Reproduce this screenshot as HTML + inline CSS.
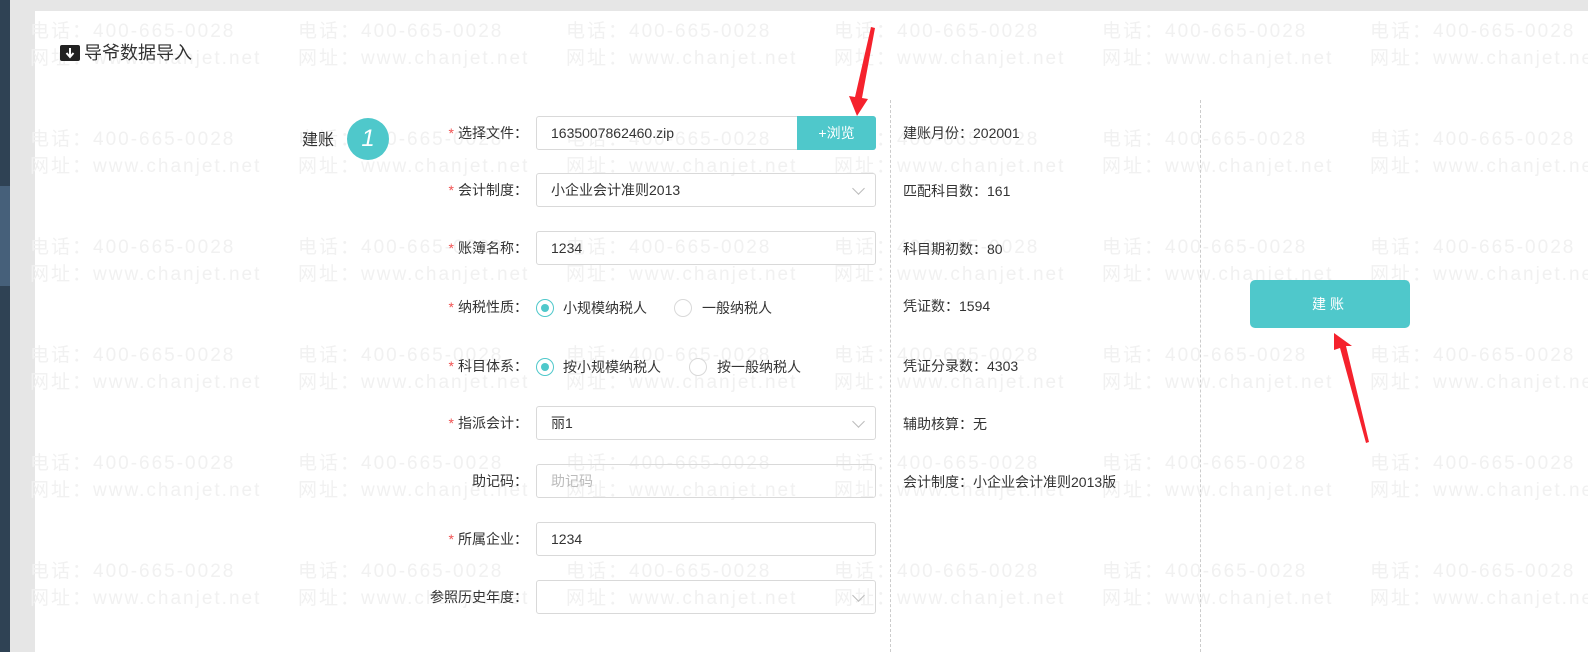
<!DOCTYPE html>
<html><head><meta charset="utf-8"><style>
*{margin:0;padding:0;box-sizing:border-box}
body{width:1588px;height:652px;overflow:hidden;position:relative;background:#e6e6e6;font-family:"Liberation Sans","Noto Sans CJK SC",sans-serif;color:#333;font-size:14px}
.side{position:absolute;left:0;top:0;width:10px;height:652px;background:#2f4254}
.side .hl{position:absolute;left:0;top:186px;width:10px;height:100px;background:#46607a}
.panel{position:absolute;left:35px;top:11px;right:0;bottom:0;background:#fff}
.wm{position:absolute;color:#f1f1f1;font-size:19px;line-height:27px;white-space:nowrap;letter-spacing:2px;font-weight:normal}
.abs{position:absolute}
.lbl{position:absolute;right:1060px;width:200px;text-align:right;font-size:14px;line-height:20px;color:#333}
.lbl b{color:#f05050;font-weight:normal;margin-right:4px}
.inp{position:absolute;left:536px;width:340px;height:34px;border:1px solid #d9d9d9;border-radius:3px;padding-left:14px;line-height:32px;font-size:14px;color:#333;background:transparent}
.chev{position:absolute;right:12px;top:10px;width:9px;height:9px;border-right:1px solid #bbb;border-bottom:1px solid #bbb;transform:rotate(45deg)}
.info{position:absolute;left:903px;font-size:14px;line-height:20px}
.radio{position:absolute;width:18px;height:18px;border-radius:50%;border:1px solid #d9d9d9;background:#fff}
.radio.on{border-color:#4fc8cb}
.radio.on:after{content:"";position:absolute;left:4px;top:4px;width:8px;height:8px;border-radius:50%;background:#4fc8cb}
.rt{position:absolute;font-size:14px;line-height:20px}
.dash{position:absolute;top:100px;bottom:0;border-left:1px dashed #ccc}
</style></head><body>
<div class="side"><div class="hl"></div></div>
<div class="panel"></div>

<div class="wm" style="left:30px;top:18px">电话：400-665-0028<br>网址：www.chanjet.net</div>
<div class="wm" style="left:298px;top:18px">电话：400-665-0028<br>网址：www.chanjet.net</div>
<div class="wm" style="left:566px;top:18px">电话：400-665-0028<br>网址：www.chanjet.net</div>
<div class="wm" style="left:834px;top:18px">电话：400-665-0028<br>网址：www.chanjet.net</div>
<div class="wm" style="left:1102px;top:18px">电话：400-665-0028<br>网址：www.chanjet.net</div>
<div class="wm" style="left:1370px;top:18px">电话：400-665-0028<br>网址：www.chanjet.net</div>
<div class="wm" style="left:30px;top:126px">电话：400-665-0028<br>网址：www.chanjet.net</div>
<div class="wm" style="left:298px;top:126px">电话：400-665-0028<br>网址：www.chanjet.net</div>
<div class="wm" style="left:566px;top:126px">电话：400-665-0028<br>网址：www.chanjet.net</div>
<div class="wm" style="left:834px;top:126px">电话：400-665-0028<br>网址：www.chanjet.net</div>
<div class="wm" style="left:1102px;top:126px">电话：400-665-0028<br>网址：www.chanjet.net</div>
<div class="wm" style="left:1370px;top:126px">电话：400-665-0028<br>网址：www.chanjet.net</div>
<div class="wm" style="left:30px;top:234px">电话：400-665-0028<br>网址：www.chanjet.net</div>
<div class="wm" style="left:298px;top:234px">电话：400-665-0028<br>网址：www.chanjet.net</div>
<div class="wm" style="left:566px;top:234px">电话：400-665-0028<br>网址：www.chanjet.net</div>
<div class="wm" style="left:834px;top:234px">电话：400-665-0028<br>网址：www.chanjet.net</div>
<div class="wm" style="left:1102px;top:234px">电话：400-665-0028<br>网址：www.chanjet.net</div>
<div class="wm" style="left:1370px;top:234px">电话：400-665-0028<br>网址：www.chanjet.net</div>
<div class="wm" style="left:30px;top:342px">电话：400-665-0028<br>网址：www.chanjet.net</div>
<div class="wm" style="left:298px;top:342px">电话：400-665-0028<br>网址：www.chanjet.net</div>
<div class="wm" style="left:566px;top:342px">电话：400-665-0028<br>网址：www.chanjet.net</div>
<div class="wm" style="left:834px;top:342px">电话：400-665-0028<br>网址：www.chanjet.net</div>
<div class="wm" style="left:1102px;top:342px">电话：400-665-0028<br>网址：www.chanjet.net</div>
<div class="wm" style="left:1370px;top:342px">电话：400-665-0028<br>网址：www.chanjet.net</div>
<div class="wm" style="left:30px;top:450px">电话：400-665-0028<br>网址：www.chanjet.net</div>
<div class="wm" style="left:298px;top:450px">电话：400-665-0028<br>网址：www.chanjet.net</div>
<div class="wm" style="left:566px;top:450px">电话：400-665-0028<br>网址：www.chanjet.net</div>
<div class="wm" style="left:834px;top:450px">电话：400-665-0028<br>网址：www.chanjet.net</div>
<div class="wm" style="left:1102px;top:450px">电话：400-665-0028<br>网址：www.chanjet.net</div>
<div class="wm" style="left:1370px;top:450px">电话：400-665-0028<br>网址：www.chanjet.net</div>
<div class="wm" style="left:30px;top:558px">电话：400-665-0028<br>网址：www.chanjet.net</div>
<div class="wm" style="left:298px;top:558px">电话：400-665-0028<br>网址：www.chanjet.net</div>
<div class="wm" style="left:566px;top:558px">电话：400-665-0028<br>网址：www.chanjet.net</div>
<div class="wm" style="left:834px;top:558px">电话：400-665-0028<br>网址：www.chanjet.net</div>
<div class="wm" style="left:1102px;top:558px">电话：400-665-0028<br>网址：www.chanjet.net</div>
<div class="wm" style="left:1370px;top:558px">电话：400-665-0028<br>网址：www.chanjet.net</div>

<div class="abs" style="left:60px;top:45px;width:20px;height:16px;background:#222;border-radius:2px"></div>
<svg class="abs" style="left:60px;top:45px" width="20" height="16"><path d="M10 3v8M6.5 8l3.5 4 3.5-4" stroke="#fff" stroke-width="2" fill="none"/></svg>
<div class="abs" style="left:84px;top:41px;font-size:18px;line-height:24px;color:#333">导爷数据导入</div>

<div class="abs" style="left:302px;top:130px;font-size:16px;line-height:22px">建账</div>
<div class="abs" style="left:347px;top:118px;width:42px;height:42px;border-radius:50%;background:#4fc8cb;color:#fff;font-size:24px;line-height:42px;text-align:center;font-style:italic">1</div>

<div class="dash" style="left:890px"></div>
<div class="dash" style="left:1200px"></div>

<div class="lbl" style="top:123px"><b>*</b>选择文件：</div>
<div class="inp" style="top:116px">1635007862460.zip</div>
<div class="abs" style="left:797px;top:116px;width:79px;height:34px;background:#4fc8cb;border-radius:0 3px 3px 0;color:#fff;line-height:34px;text-align:center;font-size:14px">+浏览</div>

<div class="lbl" style="top:180px"><b>*</b>会计制度：</div>
<div class="inp" style="top:173px">小企业会计准则2013<div class="chev"></div></div>

<div class="lbl" style="top:238px"><b>*</b>账簿名称：</div>
<div class="inp" style="top:231px">1234</div>

<div class="lbl" style="top:297px"><b>*</b>纳税性质：</div>
<div class="radio on" style="left:536px;top:299px"></div><div class="rt" style="left:563px;top:298px">小规模纳税人</div>
<div class="radio" style="left:674px;top:299px"></div><div class="rt" style="left:702px;top:298px">一般纳税人</div>

<div class="lbl" style="top:356px"><b>*</b>科目体系：</div>
<div class="radio on" style="left:536px;top:358px"></div><div class="rt" style="left:563px;top:357px">按小规模纳税人</div>
<div class="radio" style="left:689px;top:358px"></div><div class="rt" style="left:717px;top:357px">按一般纳税人</div>

<div class="lbl" style="top:413px"><b>*</b>指派会计：</div>
<div class="inp" style="top:406px">丽1<div class="chev"></div></div>

<div class="lbl" style="top:471px">助记码：</div>
<div class="inp" style="top:464px;color:#bbb">助记码</div>

<div class="lbl" style="top:529px"><b>*</b>所属企业：</div>
<div class="inp" style="top:522px">1234</div>

<div class="lbl" style="top:587px">参照历史年度：</div>
<div class="inp" style="top:580px"><div class="chev"></div></div>

<div class="info" style="top:123px">建账月份：202001</div>
<div class="info" style="top:181px">匹配科目数：161</div>
<div class="info" style="top:239px">科目期初数：80</div>
<div class="info" style="top:296px">凭证数：1594</div>
<div class="info" style="top:356px">凭证分录数：4303</div>
<div class="info" style="top:414px">辅助核算：无</div>
<div class="info" style="top:472px">会计制度：小企业会计准则2013版</div>

<div class="abs" style="left:1250px;top:280px;width:160px;height:48px;background:#4fc8cb;border-radius:5px;color:#fff;text-align:center;line-height:48px;font-size:14px;letter-spacing:4px">建账</div>

<svg class="abs" style="left:0;top:0" width="1588" height="652">
<polygon points="871,27 875,28 862,98 868,99 857,116 849,96 855,97" fill="#f5222d"/>
<polygon points="1334,333 1352,346 1346,346 1369,442 1366,443 1340,348 1334,350" fill="#f5222d"/>
</svg>
</body></html>
